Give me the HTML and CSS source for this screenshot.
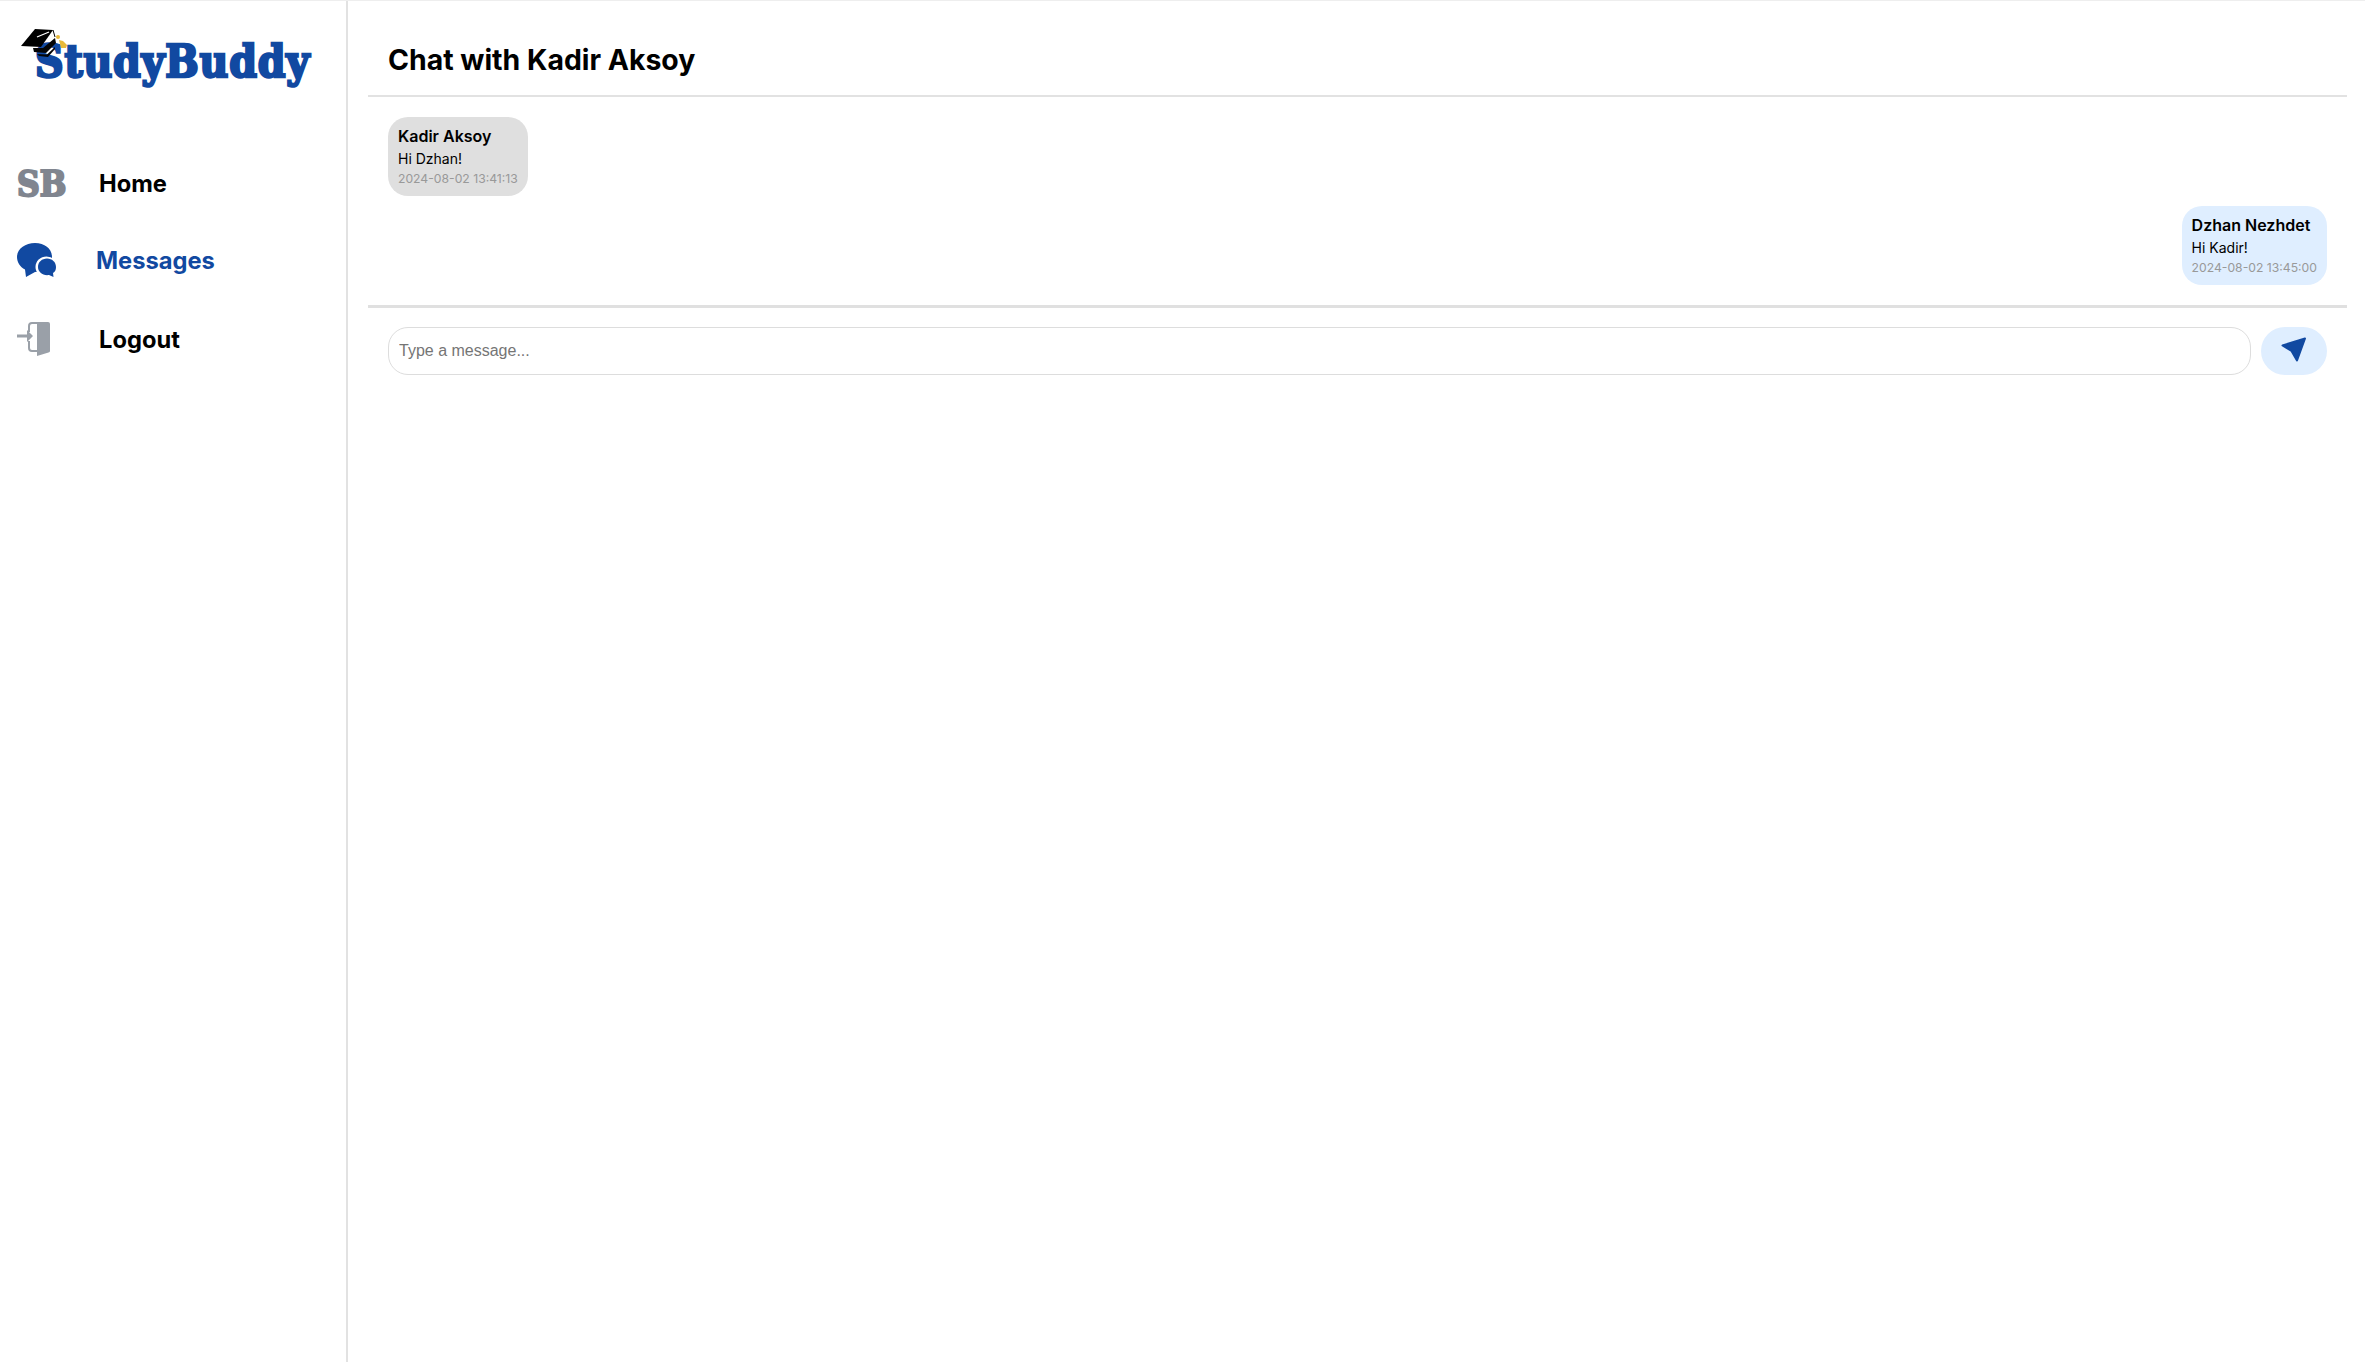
FILE: index.html
```html
<!doctype html>
<html>
<head>
	<meta charset="utf-8" />
	<title>StudyBuddy</title>
	<link rel="stylesheet" href="styles.css">
</head>
<body>
	<div class="app">
		<aside class="sidebar">
			<div class="logo">
				<span class="logo-text">StudyBuddy</span>
				<svg class="logo-cap" width="50" height="32" viewBox="0 0 50 32">
					<path d="M2 18 L16 1 L34 2 L22 19 Z" fill="#000"/>
					<path d="M18 9 L30 4" stroke="#fff" stroke-width="1.2" fill="none"/>
					<path d="M14 20 L24 20 L36 10 L37 15 L27 25 L15 24 Z" fill="#050505"/>
					<path d="M18 26 L28 26.5 L36 19 L36 21 L29 29 L20 28 Z" fill="#050505"/>
					<path d="M34 2 L36 9" stroke="#000" stroke-width="1" fill="none"/>
					<circle cx="39" cy="9" r="2" fill="#e8b93a"/>
					<path d="M40 12 L44 13 L48 17 L47 20 L42 20 Z" fill="#e8b93a"/>
				</svg>
			</div>
			<nav class="nav">
				<a class="nav-item" href="#">
					<span class="nav-icon sb-icon">SB</span>
					<span class="nav-label">Home</span>
				</a>
				<a class="nav-item active" href="#">
					<span class="nav-icon">
						<svg width="40" height="35" viewBox="0 0 40 35">
							<path d="M18 0 C28 0 35 6 35 14 C35 22 28 29 18 29 L9 34 L8 26.5 C3 24 0 19 0 14 C0 6 8 0 18 0 Z" fill="#1149a1"/>
							<ellipse cx="29.5" cy="24" rx="11" ry="10.5" fill="#fff"/>
							<path d="M30 15.5 C35 15.5 39 19 39 24 C39 27 38 29 36 30 L36.5 34 L32 32 C26 33 21 29 21 24 C21 19 25 15.5 30 15.5 Z" fill="#1149a1"/>
						</svg>
					</span>
					<span class="nav-label">Messages</span>
				</a>
				<a class="nav-item" href="#">
					<span class="nav-icon">
						<svg width="33" height="34" viewBox="0 0 33 34">
							<path d="M0 12.5 H10 V8 L16 14 L10 20 V15.5 H0 Z" fill="#9aa0a8"/>
							<path d="M12 10 V4 Q12 1 15 1 H21 M12 19 V26 Q12 29 15 29 H21" stroke="#9aa0a8" stroke-width="2" fill="none"/>
							<path d="M20 0 H31 Q33 0 33 2 V29 Q33 30 31.5 30.5 L20 34 Z" fill="#9aa0a8"/>
						</svg>
					</span>
					<span class="nav-label">Logout</span>
				</a>
			</nav>
		</aside>

		<main class="chat">
			<header class="chat-header">
				<h1>Chat with Kadir Aksoy</h1>
			</header>

			<section class="messages">
				<div class="bubble received">
					<div class="sender">Kadir Aksoy</div>
					<div class="text">Hi Dzhan!</div>
					<div class="time">2024-08-02 13:41:13</div>
				</div>
				<div class="bubble sent">
					<div class="sender">Dzhan Nezhdet</div>
					<div class="text">Hi Kadir!</div>
					<div class="time">2024-08-02 13:45:00</div>
				</div>
			</section>

			<form class="composer">
				<input class="composer-input" type="text" placeholder="Type a message..." />
				<button class="send" type="button">
					<svg class="send-icon" width="26" height="26" viewBox="0 0 26 26">
						<path d="M1.5 8.5 L24 1.5 L16 23.5 L10.5 14 Z" fill="#1149a1" stroke="#1149a1" stroke-width="2" stroke-linejoin="round"/>
					</svg>
				</button>
			</form>
		</main>
	</div>
</body>
</html>
```

FILE: styles.css
```css
html, body {
	width: 100%;
	height: 100%;
	margin: 0;
	background: #fff;
	color: #000;
	font-family: Inter, "Noto Sans", sans-serif;
	overflow: hidden;
}

.app {
	display: flex;
	height: 100%;
	box-sizing: border-box;
	border-top: 1px solid #eee;
}

/* sidebar */
.sidebar {
	width: 348px;
	flex: none;
	box-sizing: border-box;
	border-right: 2px solid #e2e2e2;
}

.logo {
	position: relative;
	height: 143px;
	padding: 33px 0 0 35px;
	box-sizing: border-box;
}

.logo-text {
	display: block;
	font-family: "DejaVu Serif Condensed", "DejaVu Serif", serif;
	font-weight: 700;
	font-size: 44px;
	line-height: 56px;
	letter-spacing: 0.8px;
	color: #1149a1;
	-webkit-text-stroke: 2.4px #1149a1;
	white-space: nowrap;
}

.logo-cap {
	position: absolute;
	left: 19px;
	top: 27px;
}

.nav {
	display: flex;
	flex-direction: column;
}

.nav-item {
	display: flex;
	align-items: center;
	height: 78px;
	box-sizing: border-box;
	padding-left: 17px;
	font-size: 23.7px;
	font-weight: 700;
	color: #000;
	text-decoration: none;
}

.nav-item.active {
	color: #1149a1;
	padding-bottom: 2px;
}

.nav-icon {
	display: flex;
	align-items: center;
	width: 82px;
	flex: none;
}

.nav-item.active .nav-icon { width: 79px; }

.sb-icon {
	font-family: "DejaVu Serif Condensed", "DejaVu Serif", serif;
	font-weight: 700;
	font-size: 35px;
	color: #80858f;
	-webkit-text-stroke: 2px #80858f;
}

/* chat */
.chat {
	flex: 1;
	padding: 0 18px 0 20px;
	min-width: 0;
}

.chat-header {
	height: 96px;
	padding: 22px 20px 0;
	display: flex;
	align-items: center;
	border-bottom: 2px solid #e2e2e2;
	box-sizing: border-box;
}

.chat-header h1 {
	margin: 0;
	font-size: 28.4px;
	font-weight: 700;
}

.messages {
	display: flex;
	flex-direction: column;
	gap: 10px;
	padding: 20px;
	border-bottom: 3px solid #e0e0e0;
}

.bubble {
	width: fit-content;
	box-sizing: border-box;
	height: 79px;
	padding: 7px 10px;
	border-radius: 20px;
}

.bubble.received { background: #dfdfdf; }
.bubble.sent {
	background: #dfeeff;
	align-self: flex-end;
}

.sender {
	font-size: 16px;
	font-weight: 600;
	line-height: 24px;
}

.text {
	font-size: 14px;
	line-height: 21px;
}

.time {
	font-size: 12.2px;
	line-height: 19px;
	color: #999;
}

.composer {
	display: flex;
	gap: 10px;
	padding: 19px 20px 20px;
}

.composer-input {
	flex: 1;
	height: 48px;
	box-sizing: border-box;
	padding: 0 10px;
	border: 1px solid #ddd;
	border-radius: 20px;
	font-family: "Liberation Sans", sans-serif;
	font-size: 16px;
	outline: none;
}

.composer-input::placeholder { color: #757575; }

.send {
	width: 66px;
	height: 48px;
	padding: 0;
	display: flex;
	align-items: center;
	justify-content: center;
	border: none;
	border-radius: 24px;
	background: #dfeeff;
}

.send-icon { margin-bottom: 3px; }
```
